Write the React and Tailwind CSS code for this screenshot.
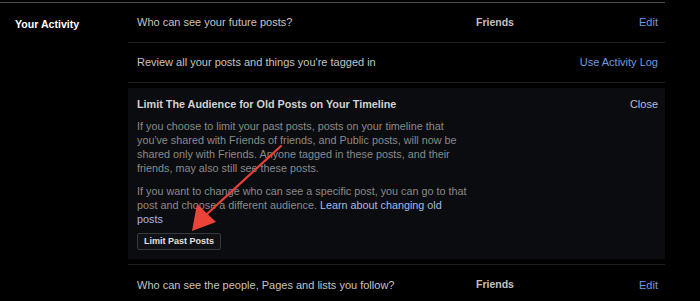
const font = { fontFamily: '"Liberation Sans", Arial, sans-serif' };

function Row({ text, value, action, border = true }) {
  return (
    <div className={`flex h-[40px] items-center pl-[9px] pr-[7px] ${border ? "border-b border-[#1f1f22]" : ""}`}>
      <div className="flex-1 text-[11px] text-[#c4c4c4]">{text}</div>
      {value && <div className="w-[163px] text-[10.5px] font-bold text-[#c2c2c2]">{value}</div>}
      <button className="text-right text-[11px] text-[#6d9be0]">{action}</button>
    </div>
  );
}

function LimitPanel() {
  return (
    <div className="my-[5px] bg-[#0b0c0f] pb-[8px] pl-[9px] pr-[7px] pt-[9px]">
      <div className="flex items-center justify-between">
        <h3 className="text-[10.8px] font-bold leading-[14px] text-[#d2d2d2]">
          Limit The Audience for Old Posts on Your Timeline
        </h3>
        <button className="text-[11px] leading-[14px] text-[#b3bde0]">Close</button>
      </div>
      <p className="mt-[8px] whitespace-nowrap text-[10.8px] leading-[14px] text-[#8a8a8a]">
        If you choose to limit your past posts, posts on your timeline that
        <br />
        you've shared with Friends of friends, and Public posts, will now be
        <br />
        shared only with Friends. Anyone tagged in these posts, and their
        <br />
        friends, may also still see these posts.
      </p>
      <p className="mt-[9px] whitespace-nowrap text-[10.8px] leading-[14px] text-[#8a8a8a]">
        If you want to change who can see a specific post, you can go to that
        <br />
        post and choose a different audience. <a className="text-[#a9b7e6]">Learn about changing old</a>
        <br />
        <a className="text-[#a9b7e6]">posts</a>
      </p>
      <button className="mt-[7px] h-[17px] rounded-[2px] border border-[#38383c] bg-[#101114] px-[6px] text-[9px] font-bold leading-none text-[#e0e0e0]">
        Limit Past Posts
      </button>
    </div>
  );
}

function Arrow() {
  return (
    <svg className="pointer-events-none absolute left-0 top-0" width="700" height="301">
      <line x1="281" y1="146" x2="207" y2="214" stroke="#e8403a" strokeWidth="2.2" strokeLinecap="round" />
      <polygon points="192,231 197,204 216,222" fill="#ec4338" />
    </svg>
  );
}

export default function App() {
  return (
    <div className="relative h-[301px] w-[700px] overflow-hidden bg-black pt-[2px]" style={font}>
      <div className="flex w-[665px] border-t border-[#4b4b4e]">
        <div className="w-[128px] pl-[15px] pt-[14px] text-[10.6px] font-bold text-white">Your Activity</div>
        <div className="flex-1">
          <Row text="Who can see your future posts?" value="Friends" action="Edit" />
          <Row text="Review all your posts and things you're tagged in" action="Use Activity Log" />
          <div className="border-b border-[#1f1f22]">
            <LimitPanel />
          </div>
          <Row text="Who can see the people, Pages and lists you follow?" value="Friends" action="Edit" border={false} />
        </div>
      </div>
      <Arrow />
    </div>
  );
}
